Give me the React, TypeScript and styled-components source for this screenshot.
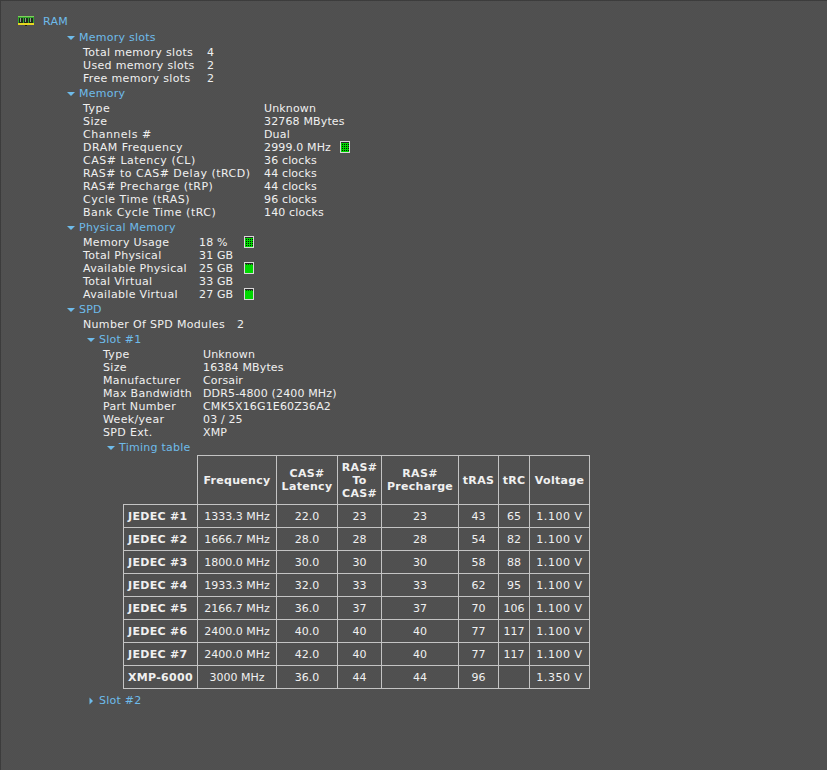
import React from "react";
import styled, { createGlobalStyle } from "styled-components";

const Global = createGlobalStyle`
  html, body { margin: 0; padding: 0; background: #505050; }
  body { font-family: "DejaVu Sans", Verdana, sans-serif; font-size: 11px; color: #f0f0f0; }
`;

const Page = styled.div`
  width: 827px;
  height: 770px;
  box-sizing: border-box;
  overflow: hidden;
  background: repeating-conic-gradient(#4f4f4f 0 25%, #515151 0 50%) 0 0 / 2px 2px;
  border-top: 1px solid #3c3c3c;
  border-left: 1px solid #3c3c3c;
  padding: 13px 0 0 17px;
`;

const RootRow = styled.div`
  display: flex;
  align-items: center;
  height: 14px;
  gap: 9px;
  margin-bottom: 3px;
`;

const Link = styled.span`
  color: #6ebbea;
  line-height: 13px;
  letter-spacing: 0.25px;
  white-space: nowrap;
`;

const Nest = styled.div<{ $left: number }>`
  padding-left: ${(p) => p.$left}px;
`;

const SectionHead = styled.div<{ $top?: number }>`
  display: flex;
  align-items: center;
  height: 13px;
  gap: 4px;
  margin-top: ${(p) => p.$top ?? 2}px;
`;

const Rows = styled.div<{ $left: number; $col: number }>`
  display: grid;
  grid-template-columns: ${(p) => p.$col}px auto;
  justify-content: start;
  padding-left: ${(p) => p.$left}px;
  margin-top: 2px;
  grid-auto-rows: 13px;
  line-height: 13px;
  white-space: nowrap;
`;

const Label = styled.span<{ $spacing?: number }>`
  letter-spacing: ${(p) => p.$spacing ?? 0.33}px;
`;

const Value = styled.span`
  display: flex;
  align-items: center;
  letter-spacing: 0.15px;
`;

const ValueText = styled.span<{ $width?: number }>`
  min-width: ${(p) => p.$width ?? 0}px;
`;

const Grid = styled.table`
  border-collapse: collapse;
  table-layout: fixed;
  width: 466px;
  margin-top: 1px;
  margin-left: 16px;
  line-height: 13px;
`;

const Cell = styled.td<{ $wide?: boolean }>`
  border: 1px solid #c4c4c4;
  padding: 0;
  height: 22px;
  text-align: center;
  letter-spacing: ${(p) => (p.$wide ? "0.55px" : "0")};
`;

const RowHead = styled.th`
  border: 1px solid #c4c4c4;
  padding: 0 0 0 4px;
  height: 22px;
  text-align: left;
  font-weight: bold;
  letter-spacing: 0.3px;
  white-space: nowrap;
`;

const ColHead = styled.th`
  border: 1px solid #c4c4c4;
  padding: 0;
  height: 48px;
  text-align: center;
  font-weight: bold;
  letter-spacing: 0.3px;
`;

const Blank = styled.th`
  border: 0;
  border-right: 1px solid #c4c4c4;
  border-bottom: 1px solid #c4c4c4;
  padding: 0;
`;

const Triangle = ({ open }: { open: boolean }) =>
  open ? (
    <svg width="8" height="8" viewBox="0 0 8 8" aria-hidden="true">
      <path d="M0 2H8L4 6Z" fill="#6ebbea" />
    </svg>
  ) : (
    <svg width="8" height="8" viewBox="0 0 8 8" aria-hidden="true">
      <path d="M2.5 0.5V7.5L6 4Z" fill="#6ebbea" />
    </svg>
  );

const RamIcon = () => (
  <svg width="16" height="10" viewBox="0 0 16 10" aria-hidden="true" shapeRendering="crispEdges">
    <rect x="0" y="0" width="16" height="7" fill="#2fa52a" />
    <rect x="0" y="0" width="16" height="1" fill="#7fce5c" />
    <rect x="1" y="2" width="4" height="5" fill="#1f2a1c" />
    <rect x="6" y="2" width="4" height="5" fill="#1f2a1c" />
    <rect x="11" y="2" width="4" height="5" fill="#1f2a1c" />
    <rect x="2" y="2" width="1" height="4" fill="#8f9f8a" />
    <rect x="7" y="2" width="1" height="4" fill="#8f9f8a" />
    <rect x="12" y="2" width="1" height="4" fill="#8f9f8a" />
    <rect x="0" y="7" width="16" height="2" fill="#e8d820" />
    <rect x="7" y="9" width="2" height="1" fill="#20200a" />
  </svg>
);

const MeterBox = styled.svg`
  flex: none;
  margin-top: -2px;
`;

const dots = [2, 4, 6, 8].flatMap((x) => [3, 5, 7, 9].map((y) => [x, y]));

const Meter = ({ fill }: { fill: "grid" | "solid" }) => (
  <MeterBox width="10" height="12" viewBox="0 0 10 12" aria-hidden="true" shapeRendering="crispEdges">
    <rect x="0" y="0" width="10" height="12" fill="#d8d8d8" />
    <rect x="1" y="1" width="8" height="10" fill="#00d800" />
    <rect x="1" y="1" width="8" height="1" fill="#2a2a2a" />
    {fill === "solid"
      ? [2, 4, 6, 8].map((x) => <rect key={x} x={x} y="2" width="1" height="1" fill="#104010" />)
      : dots.map(([x, y]) => <rect key={`${x}-${y}`} x={x} y={y} width="1" height="1" fill="#041004" />)}
  </MeterBox>
);

type Row = [string, string, ("grid" | "solid")?];

const slots: Row[] = [
  ["Total memory slots", "4"],
  ["Used memory slots", "2"],
  ["Free memory slots", "2"],
];
const memory: Row[] = [
  ["Type", "Unknown"],
  ["Size", "32768 MBytes"],
  ["Channels #", "Dual"],
  ["DRAM Frequency", "2999.0 MHz", "grid"],
  ["CAS# Latency (CL)", "36 clocks"],
  ["RAS# to CAS# Delay (tRCD)", "44 clocks"],
  ["RAS# Precharge (tRP)", "44 clocks"],
  ["Cycle Time (tRAS)", "96 clocks"],
  ["Bank Cycle Time (tRC)", "140 clocks"],
];
const physical: Row[] = [
  ["Memory Usage", "18 %", "grid"],
  ["Total Physical", "31 GB"],
  ["Available Physical", "25 GB", "solid"],
  ["Total Virtual", "33 GB"],
  ["Available Virtual", "27 GB", "solid"],
];
const slot1: Row[] = [
  ["Type", "Unknown"],
  ["Size", "16384 MBytes"],
  ["Manufacturer", "Corsair"],
  ["Max Bandwidth", "DDR5-4800 (2400 MHz)"],
  ["Part Number", "CMK5X16G1E60Z36A2"],
  ["Week/year", "03 / 25"],
  ["SPD Ext.", "XMP"],
];

const widths = [74, 79, 61, 44, 77, 40, 31, 60];
const headers = [["Frequency"], ["CAS#", "Latency"], ["RAS#", "To", "CAS#"], ["RAS#", "Precharge"], ["tRAS"], ["tRC"], ["Voltage"]];
const timing = [
  ["JEDEC #1", "1333.3 MHz", "22.0", "23", "23", "43", "65", "1.100 V"],
  ["JEDEC #2", "1666.7 MHz", "28.0", "28", "28", "54", "82", "1.100 V"],
  ["JEDEC #3", "1800.0 MHz", "30.0", "30", "30", "58", "88", "1.100 V"],
  ["JEDEC #4", "1933.3 MHz", "32.0", "33", "33", "62", "95", "1.100 V"],
  ["JEDEC #5", "2166.7 MHz", "36.0", "37", "37", "70", "106", "1.100 V"],
  ["JEDEC #6", "2400.0 MHz", "40.0", "40", "40", "77", "117", "1.100 V"],
  ["JEDEC #7", "2400.0 MHz", "42.0", "40", "40", "77", "117", "1.100 V"],
  ["XMP-6000", "3000 MHz", "36.0", "44", "44", "96", "", "1.350 V"],
];

const Section = ({ title, open = true, top }: { title: string; open?: boolean; top?: number }) => (
  <SectionHead $top={top}>
    <Triangle open={open} />
    <Link>{title}</Link>
  </SectionHead>
);

const KeyValues = ({
  rows,
  left,
  col,
  valueWidth,
  spacing,
}: {
  rows: Row[];
  left: number;
  col: number;
  valueWidth?: number;
  spacing?: number;
}) => (
  <Rows $left={left} $col={col}>
    {rows.map(([k, v, m]) => (
      <React.Fragment key={k}>
        <Label $spacing={spacing}>{k}</Label>
        <Value>
          <ValueText $width={m ? valueWidth : undefined}>{v}</ValueText>
          {m && <Meter fill={m} />}
        </Value>
      </React.Fragment>
    ))}
  </Rows>
);

export default function App() {
  return (
    <Page>
      <Global />
      <RootRow>
        <RamIcon />
        <Link>RAM</Link>
      </RootRow>
      <Nest $left={49}>
        <Section title="Memory slots" top={0} />
        <KeyValues rows={slots} left={16} col={124} />
        <Section title="Memory" />
        <KeyValues rows={memory} left={16} col={181} valueWidth={76} spacing={0.5} />
        <Section title="Physical Memory" />
        <KeyValues rows={physical} left={16} col={116} valueWidth={45} />
        <Section title="SPD" />
        <KeyValues rows={[["Number Of SPD Modules", "2"]]} left={16} col={154} />
        <Nest $left={20}>
          <Section title="Slot #1" />
          <KeyValues rows={slot1} left={16} col={100} />
          <Nest $left={20}>
            <Section title="Timing table" />
            <Grid>
              <colgroup>
                {widths.map((w, i) => (
                  <col key={i} width={w} />
                ))}
              </colgroup>
              <thead>
                <tr>
                  <Blank />
                  {headers.map((h, i) => (
                    <ColHead key={i}>
                      {h.map((l) => (
                        <div key={l}>{l}</div>
                      ))}
                    </ColHead>
                  ))}
                </tr>
              </thead>
              <tbody>
                {timing.map((r) => (
                  <tr key={r[0]}>
                    <RowHead>{r[0]}</RowHead>
                    {r.slice(1).map((c, i) => (
                      <Cell key={i} $wide={i === 6}>
                        {c}
                      </Cell>
                    ))}
                  </tr>
                ))}
              </tbody>
            </Grid>
          </Nest>
          <Section title="Slot #2" open={false} top={5} />
        </Nest>
      </Nest>
    </Page>
  );
}
